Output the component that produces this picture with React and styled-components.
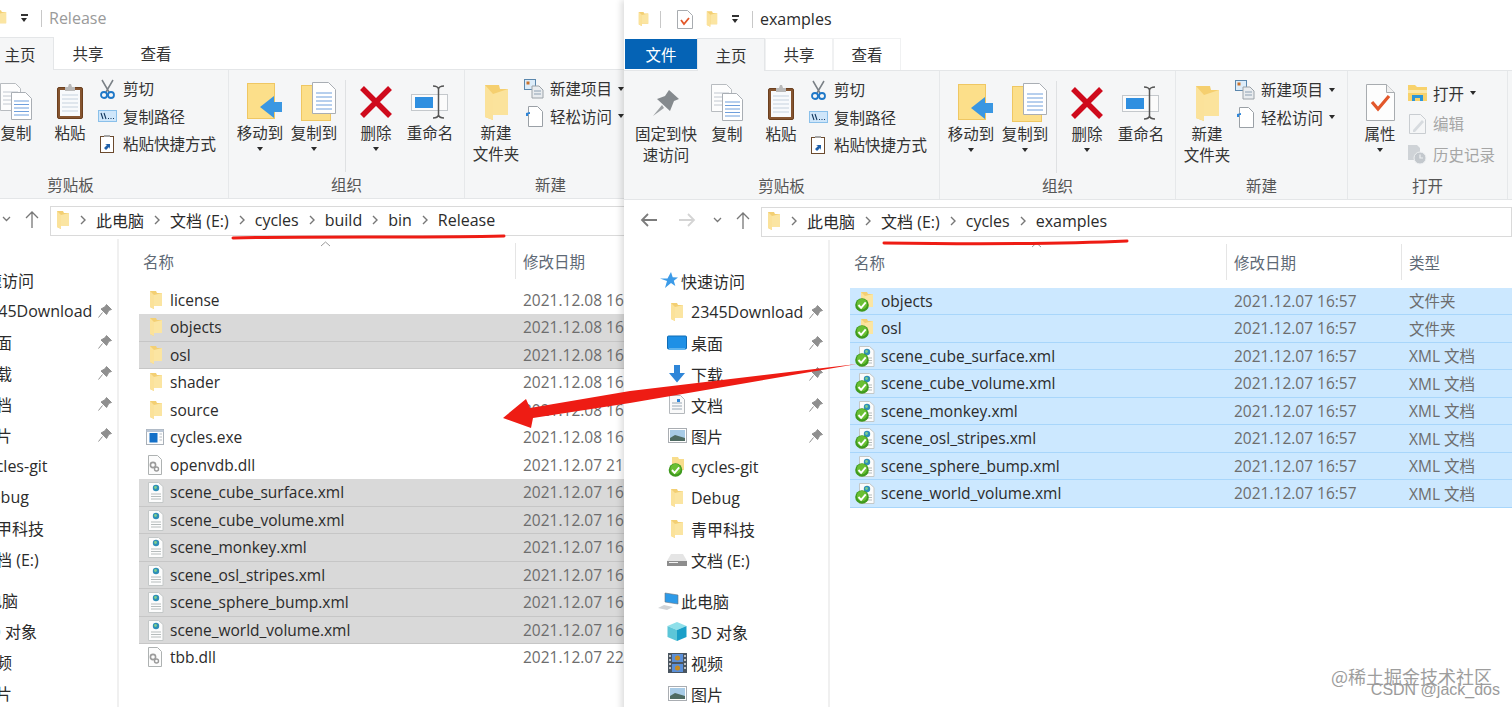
import styled, { createGlobalStyle } from "styled-components";

const GlobalStyle = createGlobalStyle`
  html, body {
    margin: 0;
    padding: 0;
    height: 100%;
    background: #fff;
    overflow: hidden;
  }
  body {
    font-family: "Open Sans", "Noto Sans CJK SC", sans-serif;
    font-size: 15.5px;
    color: #2b2b2b;
  }
`;

/* ---------- drawings ---------- */

const SmallFolder = ({ w = 14, h = 20 }) => (
  <svg width={w} height={h} viewBox="0 0 14 20">
    <path d="M1 1h6l1 2h5v13H5v3l-4-2z" fill="#f3cf73" />
    <path d="M5 5l8-2v13H5z" fill="#fbe5a2" />
    <path d="M1 1l4 4v14l-4-2z" fill="#fbe29a" />
  </svg>
);

const GreenCheck = ({ cx, cy }) => (
  <g>
    <circle cx={cx} cy={cy} r="6.8" fill="#3f9a1e" />
    <circle cx={cx} cy={cy - 1} r="5.2" fill="#69bf33" />
    <path
      d={`M${cx - 3.5} ${cy}l2.6 2.8 4.6-5.4`}
      fill="none"
      stroke="#fff"
      strokeWidth="1.9"
    />
  </g>
);

const XmlShape = () => (
  <>
    <path d="M3.5 1.500h10l4.500 4v16h-14.500z" fill="#fcfcfc" stroke="#c4c8c8" />
    <circle cx="11" cy="7" r="3.2" fill="#2e8fb8" />
    <circle cx="10.5" cy="6.5" r="1.4" fill="#7fd08a" />
    <path d="M6 13h10M6 15.500h10M6 18h10" stroke="#b6bcbc" strokeWidth="1.2" />
  </>
);

const FileIcon = ({ kind, checked }) => (
  <svg width="20" height="22" viewBox="-1 0 20 22" style={{ overflow: "visible" }}>
    {kind === "folder" && (
      <g transform="translate(4 1)">
        <path d="M1 1h6l1 2h5v13H5v3l-4-2z" fill="#f3cf73" />
        <path d="M5 5l8-2v13H5z" fill="#fbe5a2" />
        <path d="M1 1l4 4v14l-4-2z" fill="#fbe29a" />
      </g>
    )}
    {kind === "xml" && <XmlShape />}
    {kind === "dll" && (
      <>
        <path d="M3.500 1.500h9l4 4v15h-13z" fill="#fcfcfc" stroke="#aeb2b2" />
        <circle cx="8" cy="11" r="2.6" fill="none" stroke="#9a9a9a" strokeWidth="1.6" />
        <circle cx="11.5" cy="15" r="2" fill="none" stroke="#9a9a9a" strokeWidth="1.4" />
      </>
    )}
    {kind === "exe" && (
      <>
        <rect x="1.5" y="3.5" width="17" height="15" fill="#fdfdfd" stroke="#a9b0b8" />
        <rect x="1.5" y="3.5" width="17" height="2.5" fill="#b9c6d6" />
        <rect x="4.5" y="7" width="8" height="9.5" fill="#1470c8" />
        <path d="M14.500 8h2.500M14.500 11h2.500M14.500 14h2.500" stroke="#b5bcc4" />
      </>
    )}
    {checked && <GreenCheck cx={6} cy={15} />}
  </svg>
);

const PinSmall = () => (
  <svg width="14" height="14" viewBox="0 0 14 14">
    <path
      d="M8.500 .5l5 5-2.600.8-2.300 4.200-5.600-5.500 4-2.200zM4.500 8.500l-4 5"
      fill="#8f8f8f"
      stroke="#8f8f8f"
      strokeWidth="1"
    />
  </svg>
);

const NavIcon = ({ kind }) => {
  switch (kind) {
    case "star":
      return (
        <svg width="18" height="17" viewBox="0 0 18 17">
          <path d="M11 0l1.700 5.200 5.300.2-4.200 3.400L15.300 14 11 11l-6 5 2-7L0 6.500h7.500z" fill="#3c9be8" />
        </svg>
      );
    case "folder":
      return <SmallFolder />;
    case "desktop":
      return (
        <svg width="20" height="16" viewBox="0 0 20 16">
          <rect x="0.5" y="1" width="19" height="13" rx="1" fill="#1e90e6" stroke="#0f6cb5" />
          <rect x="2" y="13" width="16" height="2" fill="#5fb4ee" />
        </svg>
      );
    case "download":
      return (
        <svg width="16" height="18" viewBox="0 0 16 18">
          <path d="M5 0h6v8h5l-8 9.500L0 8h5z" fill="#2f86d8" />
        </svg>
      );
    case "doc":
      return (
        <svg width="16" height="19" viewBox="0 0 16 19">
          <path d="M.5.500h11l4 4v14H.5z" fill="#fafafa" stroke="#b4b8bc" />
          <path d="M3 8h10M3 11h10M3 14h10" stroke="#9aa8b4" />
          <path d="M8 4h3v3H8z" fill="#2f86d8" />
        </svg>
      );
    case "pic":
      return (
        <svg width="19" height="15" viewBox="0 0 19 15">
          <rect x=".5" y=".5" width="18" height="14" fill="#fff" stroke="#a9adb2" />
          <rect x="2" y="2" width="15" height="11" fill="#a8cbe6" />
          <path d="M2 10l5-3 10 3v3H2z" fill="#4f6b62" />
        </svg>
      );
    case "git":
      return (
        <svg width="18" height="20" viewBox="0 0 18 20" style={{ overflow: "visible" }}>
          <path d="M4 0h6l1 2h5v11H4z" fill="#f8dd8c" />
          <GreenCheck cx={7.5} cy={13} />
        </svg>
      );
    case "drive":
      return (
        <svg width="20" height="14" viewBox="0 0 20 14">
          <path d="M4 1h12l4 7v5H0V8z" fill="#e5e5e5" />
          <path d="M0 8h20v5H0z" fill="#8d8d8d" />
          <path d="M2 9.500h9" stroke="#f2f2f2" />
        </svg>
      );
    case "pc":
      return (
        <svg width="22" height="18" viewBox="0 0 22 18">
          <path d="M7 1l13 2v9L7 10z" fill="#2d9ae8" stroke="#6b7680" strokeWidth=".6" />
          <path d="M0 16l6-3 9 2-6 3z" fill="#d0d3d6" />
        </svg>
      );
    case "cube":
      return (
        <svg width="20" height="19" viewBox="0 0 20 19">
          <path d="M10 0l9.500 4-9.500 4L.5 4z" fill="#8fe0ea" />
          <path d="M.5 4L10 8v11L.5 15z" fill="#5cc6d8" />
          <path d="M19.500 4L10 8v11l9.500-4z" fill="#1a9fc8" />
        </svg>
      );
    case "video":
      return (
        <svg width="19" height="20" viewBox="0 0 19 20">
          <rect x="0" y="0" width="19" height="20" fill="#4a5560" />
          <rect x="4" y="1" width="11" height="8" fill="#5a8fd8" />
          <rect x="4" y="11" width="11" height="8" fill="#5a8fd8" />
          <circle cx="9.5" cy="5" r="2.5" fill="#c58a22" />
          <circle cx="9.5" cy="15" r="2.5" fill="#c58a22" />
          <path d="M2 2v16M17 2v16" stroke="#e6e6e6" strokeWidth="1.5" strokeDasharray="2 2" />
        </svg>
      );
    default:
      return null;
  }
};

const RibbonIcon = ({ kind }) => {
  switch (kind) {
    case "pin":
      return (
        <svg width="28" height="28" viewBox="0 0 28 28">
          <path d="M17 1l10 9-5 2-4 10L5 10l8-3z" fill="#858a8e" />
          <path d="M10 16L1 27l11-8z" fill="#9b9fa2" />
        </svg>
      );
    case "copy":
      return (
        <svg width="32" height="37" viewBox="0 0 32 37">
          <path d="M.5.500h15l5 5v22H.5z" fill="#fdfdfd" stroke="#b8bcc0" />
          <path d="M3 9h15M3 13h15M3 17h15M3 21h15" stroke="#c2c8d0" />
          <path d="M11.500 9.500h14l6 6v21h-20z" fill="#fff" stroke="#a9aeb4" />
          <path d="M14 18h15M14 21.500h15M14 25h15M14 28.500h15M14 32h15" stroke="#6f9fdc" />
        </svg>
      );
    case "paste":
      return (
        <svg width="28" height="37" viewBox="0 0 28 37">
          <rect x="1.5" y="4.5" width="25" height="31" rx="1.5" fill="#85542f" stroke="#6b3f1e" />
          <rect x="4" y="7" width="20" height="26" fill="#f8fafc" />
          <path d="M6 12h16M6 16h16M6 20h16M6 24h16M6 28h16" stroke="#c6d2de" />
          <path d="M9 8V4h3l1-3h2l1 3h3v4z" fill="#b9b9b9" />
        </svg>
      );
    case "cut":
      return (
        <svg width="15" height="20" viewBox="0 0 15 20">
          <path d="M2 1l7 12M13 1L6 13" stroke="#7a8086" strokeWidth="1.5" />
          <circle cx="4" cy="16" r="3" fill="none" stroke="#1f78c8" strokeWidth="1.8" />
          <circle cx="11" cy="16" r="3" fill="none" stroke="#1f78c8" strokeWidth="1.8" />
        </svg>
      );
    case "path":
      return (
        <svg width="19" height="12" viewBox="0 0 19 12">
          <rect x=".5" y=".5" width="18" height="11" fill="#cfe6fa" stroke="#8ac0ea" />
          <path d="M3 3l2 6M6 3l2 6" stroke="#14385e" strokeWidth="1.1" />
          <path d="M10 8.500h1M12.500 8.500h1M15 8.500h1" stroke="#14385e" />
        </svg>
      );
    case "shortcut":
      return (
        <svg width="14" height="19" viewBox="0 0 14 19">
          <rect x=".5" y="2.5" width="13" height="16" fill="#fff" stroke="#6b4a2e" />
          <path d="M4 3V1h6v2z" fill="#a5a5a5" />
          <path d="M4 14l3-3-2-1h5v5l-1-2-3 3z" fill="#1f5fa8" />
        </svg>
      );
    case "move":
      return (
        <svg width="35" height="37" viewBox="0 0 35 37">
          <rect x=".5" y=".5" width="27" height="35" fill="#fcdf8a" stroke="#efc763" />
          <path d="M13 24L27 13v6h8v10h-8v6z" fill="#3a97e2" />
        </svg>
      );
    case "copyto":
      return (
        <svg width="35" height="39" viewBox="0 0 35 39">
          <rect x=".5" y="3.5" width="29" height="35" fill="#fcdf8a" stroke="#efc763" />
          <path d="M11.500 .5h16l7 7v24h-23z" fill="#fff" stroke="#a9aeb4" />
          <path d="M15 11h16M15 15h16M15 19h16M15 23h16M15 27h16" stroke="#6f9fdc" />
        </svg>
      );
    case "delete":
      return (
        <svg width="34" height="34" viewBox="0 0 34 34">
          <path d="M3 3l28 28M31 3L3 31" stroke="#cf0a1c" strokeWidth="5.5" />
        </svg>
      );
    case "rename":
      return (
        <svg width="38" height="34" viewBox="0 0 38 34">
          <rect x=".5" y="9.5" width="36" height="16" fill="#fbfbfb" stroke="#c4c8cc" />
          <rect x="4" y="12" width="18" height="11" fill="#2f8fe0" />
          <path
            d="M22 1c3 0 5 1 5.500 3v26c-.5 2-2.500 3-5.500 3M33 1c-3 0-5 1-5.500 3v26c.5 2 2.500 3 5.500 3"
            fill="none"
            stroke="#555"
            strokeWidth="1.5"
          />
        </svg>
      );
    case "newfolder":
      return (
        <svg width="25" height="36" viewBox="0 0 25 36">
          <path d="M1 1h14l1 4h8v26H9v5l-8-3z" fill="#f5cf6f" />
          <path d="M9 10l15-5v26H9z" fill="#fbe39c" />
          <path d="M1 1l8 9v26l-8-3z" fill="#fbe29a" />
        </svg>
      );
    case "newitem":
      return (
        <svg width="20" height="20" viewBox="0 0 20 20">
          <rect x=".5" y=".5" width="11" height="10" fill="#dcecf9" stroke="#5b87ad" />
          <rect x="2.5" y="2.5" width="3" height="3" fill="#c9722c" />
          <path d="M8 7h7l4 4v8H8z" fill="#e9ecef" stroke="#9ba2a8" />
          <path d="M10 12h7M10 15h7" stroke="#8da0b2" />
        </svg>
      );
    case "easy":
      return (
        <svg width="18" height="21" viewBox="0 0 18 21">
          <path d="M3.500 .5h9l5 5v15h-14z" fill="#fff" stroke="#9aa0a6" />
          <path d="M1 7l4-1v2H3v2H1z" fill="#2f86d8" />
        </svg>
      );
    case "props":
      return (
        <svg width="29" height="37" viewBox="0 0 29 37">
          <path d="M.5.500h20l8 8v28H.5z" fill="#fdfdfd" stroke="#a8acb0" />
          <path d="M20.500.500v8h8" fill="#f0f0f0" stroke="#a8acb0" />
          <path d="M6 18l6 7 11-13" fill="none" stroke="#e2572a" strokeWidth="3.2" />
        </svg>
      );
    case "open":
      return (
        <svg width="19" height="18" viewBox="0 0 19 18">
          <path d="M0 1h7l2 2h10v14H0z" fill="#f8d26c" />
          <path d="M0 6h19v3H0z" fill="#fbe7a8" />
          <path d="M4 17v-6h11v6h-3v-3H7v3z" fill="#2d96d8" />
        </svg>
      );
    case "edit":
      return (
        <svg width="17" height="20" viewBox="0 0 17 20">
          <path d="M.5.500h11l5 5v14H.5z" fill="#f5f6f7" stroke="#c9cdd1" />
          <path d="M4 16L13 6l2 2-9 10H4z" fill="#d7dbdf" />
        </svg>
      );
    case "history":
      return (
        <svg width="20" height="21" viewBox="0 0 20 21">
          <path d="M1 1h9l3 3v12H1z" fill="#cfd3d7" />
          <circle cx="13" cy="14" r="6" fill="#c3c8cd" stroke="#eef0f2" />
          <path d="M13 10.500V14h3" fill="none" stroke="#eef0f2" strokeWidth="1.2" />
        </svg>
      );
    default:
      return null;
  }
};

const DownCaret = styled.span`
  display: inline-block;
  width: 0;
  height: 0;
  border-left: 3.5px solid transparent;
  border-right: 3.5px solid transparent;
  border-top: 4px solid #2b2b2b;
`;

/* ---------- window chrome ---------- */

const Desktop = styled.div`
  position: relative;
  width: 1512px;
  height: 707px;
  overflow: hidden;
  background: #fff;
`;

const Win = styled.section`
  position: absolute;
  left: ${(p) => p.$x}px;
  top: ${(p) => p.$y}px;
  width: ${(p) => p.$w}px;
  height: 720px;
  background: #fff;
  z-index: ${(p) => p.$z};
  display: flex;
  flex-direction: column;
  box-shadow: ${(p) => (p.$front ? "-3px 0 6px rgba(0, 0, 0, 0.13)" : "none")};
`;

const TitleBar = styled.div`
  height: 38px;
  display: flex;
  align-items: center;
  padding-left: 14px;
`;

const TitleSep = styled.span`
  width: 1px;
  height: 17px;
  background: #c8c8c8;
  margin: 0 ${(p) => p.$gap || 0}px 0 ${(p) => p.$gapLeft || 0}px;
`;

const QuickSlot = styled.span`
  display: flex;
  align-items: center;
  justify-content: center;
  width: ${(p) => p.$w}px;
  margin-left: ${(p) => p.$ml || 0}px;
`;

const QuickCaret = styled.span`
  display: flex;
  flex-direction: column;
  align-items: center;
  gap: 2px;
  width: 10px;
  margin-left: 12px;
  &::before {
    content: "";
    width: 7px;
    height: 1.5px;
    background: #333;
  }
`;

const WinTitle = styled.span`
  font-size: 16px;
  margin-left: 7px;
  color: ${(p) => (p.$dim ? "#9a9a9a" : "#2b2b2b")};
`;

const Tabs = styled.div`
  height: 33px;
  box-sizing: border-box;
  display: flex;
  padding-left: 1px;
  border-bottom: 1px solid #e4e6e8;
`;

const FileTab = styled.div`
  width: 72px;
  height: 30px;
  margin-top: 1px;
  background: #0563b5;
  color: #fff;
  display: flex;
  align-items: center;
  justify-content: center;
`;

const Tab = styled.div`
  width: 66px;
  display: flex;
  align-items: center;
  justify-content: center;
  color: #333;
  background: ${(p) => (p.$active ? "#f5f6f7" : "#fff")};
  border: 1px solid ${(p) => (p.$active ? "#e4e6e8" : p.$framed ? "#f0f1f2" : "transparent")};
  border-bottom: 0;
  margin-bottom: ${(p) => (p.$active ? "-1px" : "0")};
`;

const Ribbon = styled.div`
  height: 129px;
  box-sizing: border-box;
  display: flex;
  background: #f5f6f7;
  border-bottom: 1px solid #e4e6e8;
`;

const Group = styled.div`
  width: ${(p) => p.$w}px;
  flex: none;
  display: flex;
  flex-direction: column;
  border-right: 1px solid #e6e8ea;
  box-sizing: border-box;
`;

const GroupBody = styled.div`
  height: 102px;
  box-sizing: border-box;
  flex: none;
  display: flex;
  padding: 5px 0 0 ${(p) => p.$pad || 0}px;
`;

const GroupLabel = styled.div`
  height: 26px;
  text-align: center;
  color: #555;
  line-height: 26px;
`;

const BigButton = styled.div`
  width: ${(p) => p.$w}px;
  flex: none;
  display: flex;
  flex-direction: column;
  align-items: center;
  padding-top: 5px;
`;

const BigIcon = styled.div`
  height: 43px;
  display: flex;
  align-items: center;
  justify-content: center;
  margin-left: ${(p) => p.$nudge || 0}px;
`;

const BigLabel = styled.div`
  line-height: 21px;
  text-align: center;
  white-space: pre-line;
  color: #333;
`;

const CaretRow = styled.div`
  line-height: 0;
  margin-top: 1px;
`;

const VSep = styled.div`
  width: 1px;
  height: 92px;
  margin: 5px 3px 0 4px;
  background: #dfe1e3;
`;

const SmallColumn = styled.div`
  display: flex;
  flex-direction: column;
  margin-left: ${(p) => p.$ml || 0}px;
  margin-top: ${(p) => p.$mt || 0}px;
`;

const SmallRow = styled.div`
  height: ${(p) => p.$h || 27.5}px;
  display: flex;
  align-items: center;
  gap: 6px;
  white-space: nowrap;
  color: ${(p) => (p.$off ? "#a6a6a6" : "#333")};
`;

const SmallIconBox = styled.span`
  width: 20px;
  display: flex;
  justify-content: center;
  flex: none;
`;

const AddressBar = styled.div`
  height: 40px;
  display: flex;
  align-items: center;
`;

const NavArrows = styled.div`
  width: 137px;
  flex: none;
  height: 100%;
  display: flex;
  align-items: center;
`;

const ArrowSlot = styled.span`
  width: ${(p) => p.$w}px;
  display: flex;
  justify-content: center;
  flex: none;
`;

const AddressBox = styled.div`
  flex: 1;
  height: 30px;
  margin-top: 4px;
  padding: 0 0 2px 5px;
  box-sizing: border-box;
  border: 1px solid #dadada;
  display: flex;
  align-items: center;
  gap: 10px;
  font-size: 16px;
`;

const Crumb = styled.span`
  white-space: nowrap;
  color: #2b2b2b;
`;

const CrumbChevron = () => (
  <svg width="6" height="10" viewBox="0 0 6 10">
    <path d="M1 1l4 4-4 4" fill="none" stroke="#777" strokeWidth="1.4" />
  </svg>
);

const Body = styled.div`
  flex: 1;
  display: flex;
  min-height: 0;
`;

const NavPane = styled.nav`
  width: 206px;
  flex: none;
  box-sizing: border-box;
  padding-top: 25px;
  border-right: 2px solid #f0f0f0;
  font-size: 16px;
`;

const NavRow = styled.div`
  height: 31px;
  display: flex;
  align-items: center;
  position: relative;
  padding-left: ${(p) => (p.$top ? 34 : 42)}px;
  margin-top: ${(p) => (p.$gapTop ? 10 : 0)}px;
  white-space: nowrap;
`;

const NavIconBox = styled.span`
  width: 22px;
  height: 22px;
  display: flex;
  align-items: center;
  justify-content: center;
  flex: none;
  margin-right: ${(p) => (p.$top ? 1 : 3)}px;
`;

const PinSlot = styled.span`
  position: absolute;
  left: 185px;
  top: 9px;
  display: flex;
`;

const FileArea = styled.div`
  flex: 1;
  min-width: 0;
  padding-left: 20px;
`;

const HeaderRow = styled.div`
  height: 47.5px;
  display: grid;
  grid-template-columns: 376px 175px 1fr;
  position: relative;
`;

const HeaderCell = styled.div`
  height: 36px;
  margin-top: 4px;
  display: flex;
  align-items: center;
  color: #5f6a76;
  border-left: ${(p) => (p.$first ? "0" : "1px solid #e5e5e5")};
  padding-left: ${(p) => (p.$first ? 4 : 7)}px;
`;

const SortCaret = styled.span`
  position: absolute;
  left: 181px;
  top: 2px;
  display: flex;
`;

const FileRow = styled.div`
  height: 27.5px;
  box-sizing: border-box;
  display: grid;
  grid-template-columns: 376px 175px 1fr;
  align-items: center;
  background: ${(p) => (p.$sel === "blue" ? "#cce8ff" : p.$sel === "gray" ? "#d9d9d9" : "transparent")};
  border-bottom: 1px solid
    ${(p) => (p.$sel === "blue" ? "#a8d6fb" : p.$sel === "gray" ? "#c6c6c6" : "transparent")};
`;

const NameCell = styled.div`
  display: flex;
  align-items: center;
  gap: 6px;
  padding-left: 5px;
  white-space: nowrap;
`;

const MetaCell = styled.div`
  padding-left: 8px;
  color: #6d6d6d;
  white-space: nowrap;
`;

/* ---------- annotations ---------- */

const Annotation = styled.svg`
  position: absolute;
  inset: 0;
  z-index: 5;
  pointer-events: none;
`;

const Watermark = styled.div`
  position: absolute;
  z-index: 6;
  right: ${(p) => p.$right}px;
  top: ${(p) => p.$top}px;
  font-family: ${(p) =>
    p.$latin ? '"Liberation Sans", sans-serif' : '"Noto Sans CJK SC", sans-serif'};
  font-size: ${(p) => p.$size}px;
  color: ${(p) => p.$color};
  white-space: nowrap;
`;

/* ---------- data ---------- */

const navItems = [
  { kind: "star", label: "快速访问", top: true },
  { kind: "folder", label: "2345Download", pin: true },
  { kind: "desktop", label: "桌面", pin: true },
  { kind: "download", label: "下载", pin: true },
  { kind: "doc", label: "文档", pin: true },
  { kind: "pic", label: "图片", pin: true },
  { kind: "git", label: "cycles-git" },
  { kind: "folder", label: "Debug" },
  { kind: "folder", label: "青甲科技" },
  { kind: "drive", label: "文档 (E:)" },
  { kind: "pc", label: "此电脑", top: true, gapTop: true },
  { kind: "cube", label: "3D 对象" },
  { kind: "video", label: "视频" },
  { kind: "pic", label: "图片" },
];

const xmlNames = [
  "scene_cube_surface.xml",
  "scene_cube_volume.xml",
  "scene_monkey.xml",
  "scene_osl_stripes.xml",
  "scene_sphere_bump.xml",
  "scene_world_volume.xml",
];

const D8 = "2021.12.08 16:57";
const D7 = "2021.12.07 16:57";

const leftFiles = [
  { name: "license", kind: "folder", date: D8, type: "文件夹" },
  { name: "objects", kind: "folder", date: D8, type: "文件夹", sel: "gray" },
  { name: "osl", kind: "folder", date: D8, type: "文件夹", sel: "gray" },
  { name: "shader", kind: "folder", date: D8, type: "文件夹" },
  { name: "source", kind: "folder", date: D8, type: "文件夹" },
  { name: "cycles.exe", kind: "exe", date: D8, type: "应用程序" },
  { name: "openvdb.dll", kind: "dll", date: "2021.12.07 21:10", type: "DLL 文件" },
  ...xmlNames.map((name) => ({ name, kind: "xml", date: D7, type: "XML 文档", sel: "gray" })),
  { name: "tbb.dll", kind: "dll", date: "2021.12.07 22:10", type: "DLL 文件" },
];

const rightFiles = [
  { name: "objects", kind: "folder", date: D7, type: "文件夹", sel: "blue", checked: true },
  { name: "osl", kind: "folder", date: D7, type: "文件夹", sel: "blue", checked: true },
  ...xmlNames.map((name) => ({
    name,
    kind: "xml",
    date: D7,
    type: "XML 文档",
    sel: "blue",
    checked: true,
  })),
];

/* ---------- explorer ---------- */

function SmallAction({ icon, label, h, off, caret }) {
  return (
    <SmallRow $h={h} $off={off}>
      <SmallIconBox>
        <RibbonIcon kind={icon} />
      </SmallIconBox>
      <span>{label}</span>
      {caret && <DownCaret />}
    </SmallRow>
  );
}

function BigAction({ w, icon, label, caret, nudge }) {
  return (
    <BigButton $w={w}>
      <BigIcon $nudge={nudge}>
        <RibbonIcon kind={icon} />
      </BigIcon>
      <BigLabel>{label}</BigLabel>
      {caret && (
        <CaretRow>
          <DownCaret />
        </CaretRow>
      )}
    </BigButton>
  );
}

function Crumbed({ label }) {
  return (
    <>
      <CrumbChevron />
      <Crumb>{label}</Crumb>
    </>
  );
}

function Explorer({ title, dim, crumbs, files, framedTabs }) {
  return (
    <>
      <TitleBar>
        <QuickSlot $w={11}>
          <SmallFolder w={12} h={18} />
        </QuickSlot>
        <TitleSep $gapLeft={11} $gap={16} />
        <QuickSlot $w={16}>
          <svg width="16" height="19" viewBox="0 0 16 19">
            <path d="M.5.500h10l5 5v13H.5z" fill="#fff" stroke="#a8acb0" />
            <path d="M4 10l3 4 5-6" fill="none" stroke="#e2572a" strokeWidth="1.8" />
          </svg>
        </QuickSlot>
        <QuickSlot $w={12} $ml={13}>
          <SmallFolder w={12} h={18} />
        </QuickSlot>
        <QuickCaret>
          <DownCaret />
        </QuickCaret>
        <TitleSep $gapLeft={12} />
        <WinTitle $dim={dim}>{title}</WinTitle>
      </TitleBar>

      <Tabs>
        <FileTab>文件</FileTab>
        <Tab $active>主页</Tab>
        <Tab $framed={framedTabs}>共享</Tab>
        <Tab $framed={framedTabs}>查看</Tab>
      </Tabs>

      <Ribbon>
        <Group $w={316}>
          <GroupBody $pad={10}>
            <BigAction w={64} icon="pin" label={"固定到快\n速访问"} />
            <BigAction w={58} icon="copy" label="复制" />
            <BigAction w={50} icon="paste" label="粘贴" />
            <SmallColumn $ml={2}>
              <SmallAction icon="cut" label="剪切" />
              <SmallAction icon="path" label="复制路径" />
              <SmallAction icon="shortcut" label="粘贴快捷方式" />
            </SmallColumn>
          </GroupBody>
          <GroupLabel>剪贴板</GroupLabel>
        </Group>
        <Group $w={236}>
          <GroupBody $pad={4}>
            <BigAction w={54} icon="move" label="移动到" caret nudge={8} />
            <BigAction w={54} icon="copyto" label="复制到" caret nudge={8} />
            <VSep />
            <BigAction w={54} icon="delete" label="删除" caret />
            <BigAction w={54} icon="rename" label="重命名" />
          </GroupBody>
          <GroupLabel>组织</GroupLabel>
        </Group>
        <Group $w={172}>
          <GroupBody $pad={5}>
            <BigAction w={52} icon="newfolder" label={"新建\n文件夹"} />
            <SmallColumn $ml={2}>
              <SmallAction icon="newitem" label="新建项目" caret />
              <SmallAction icon="easy" label="轻松访问" caret />
            </SmallColumn>
          </GroupBody>
          <GroupLabel>新建</GroupLabel>
        </Group>
        <Group $w={160}>
          <GroupBody $pad={6}>
            <BigAction w={52} icon="props" label="属性" caret />
            <SmallColumn $ml={1} $mt={2}>
              <SmallAction icon="open" label="打开" h={30.5} caret />
              <SmallAction icon="edit" label="编辑" h={30.5} off />
              <SmallAction icon="history" label="历史记录" h={30.5} off />
            </SmallColumn>
          </GroupBody>
          <GroupLabel>打开</GroupLabel>
        </Group>
      </Ribbon>

      <AddressBar>
        <NavArrows>
          <ArrowSlot $w={50}>
            <svg width="18" height="14" viewBox="0 0 18 14">
              <path d="M17 7H2M8 1L2 7l6 6" fill="none" stroke="#7c7c7c" strokeWidth="1.8" />
            </svg>
          </ArrowSlot>
          <ArrowSlot $w={26}>
            <svg width="18" height="14" viewBox="0 0 18 14">
              <path d="M1 7h15M10 1l6 6-6 6" fill="none" stroke="#d4d4d4" strokeWidth="1.8" />
            </svg>
          </ArrowSlot>
          <ArrowSlot $w={34}>
            <svg width="9" height="6" viewBox="0 0 9 6">
              <path d="M1 1l3.500 3.500L8 1" fill="none" stroke="#777" strokeWidth="1.3" />
            </svg>
          </ArrowSlot>
          <ArrowSlot $w={18}>
            <svg width="14" height="18" viewBox="0 0 14 18">
              <path d="M7 18V2M1 8l6-6 6 6" fill="none" stroke="#777" strokeWidth="1.3" />
            </svg>
          </ArrowSlot>
        </NavArrows>
        <AddressBox>
          <SmallFolder w={14} h={20} />
          {crumbs.map((c) => (
            <Crumbed key={c} label={c} />
          ))}
        </AddressBox>
      </AddressBar>

      <Body>
        <NavPane>
          {navItems.map((item) => (
            <NavRow key={item.label + item.kind} $top={item.top} $gapTop={item.gapTop}>
              <NavIconBox $top={item.top}>
                <NavIcon kind={item.kind} />
              </NavIconBox>
              {item.label}
              {item.pin && (
                <PinSlot>
                  <PinSmall />
                </PinSlot>
              )}
            </NavRow>
          ))}
        </NavPane>
        <FileArea>
          <HeaderRow>
            <HeaderCell $first>名称</HeaderCell>
            <HeaderCell>修改日期</HeaderCell>
            <HeaderCell>类型</HeaderCell>
            <SortCaret>
              <svg width="11" height="6" viewBox="0 0 11 6">
                <path d="M1 5l4.500-4L10 5" fill="none" stroke="#9a9a9a" />
              </svg>
            </SortCaret>
          </HeaderRow>
          {files.map((f) => (
            <FileRow key={f.name} $sel={f.sel}>
              <NameCell>
                <FileIcon kind={f.kind} checked={f.checked} />
                {f.name}
              </NameCell>
              <MetaCell>{f.date}</MetaCell>
              <MetaCell>{f.type}</MetaCell>
            </FileRow>
          ))}
        </FileArea>
      </Body>
    </>
  );
}

export default function App() {
  return (
    <Desktop>
      <GlobalStyle />
      <Win $x={-87} $y={-1} $w={800} $z={1}>
        <Explorer
          title="Release"
          dim
          crumbs={["此电脑", "文档 (E:)", "cycles", "build", "bin", "Release"]}
          files={leftFiles}
        />
      </Win>
      <Win $x={624} $y={0} $w={888} $z={2} $front>
        <Explorer
          title="examples"
          framedTabs
          crumbs={["此电脑", "文档 (E:)", "cycles", "examples"]}
          files={rightFiles}
        />
      </Win>
      <Annotation width="1512" height="707" viewBox="0 0 1512 707">
        <path d="M233 238C300 236 430 238 504 236" fill="none" stroke="#ee1c14" strokeWidth="3" strokeLinecap="round" />
        <path d="M884 243C960 244 1060 244 1127 241" fill="none" stroke="#ee1c14" strokeWidth="3" strokeLinecap="round" />
        <path d="M503 418L526 399 530 408 630 391 857 364 630 403 533 418 531 428z" fill="#ee1c14" />
      </Annotation>
      <Watermark $right={20} $top={663} $size={18} $color="#9d9d9d">
        @稀土掘金技术社区
      </Watermark>
      <Watermark $right={12} $top={681} $size={16} $color="#9b9b9b" $latin>
        CSDN @jack_dos
      </Watermark>
    </Desktop>
  );
}
